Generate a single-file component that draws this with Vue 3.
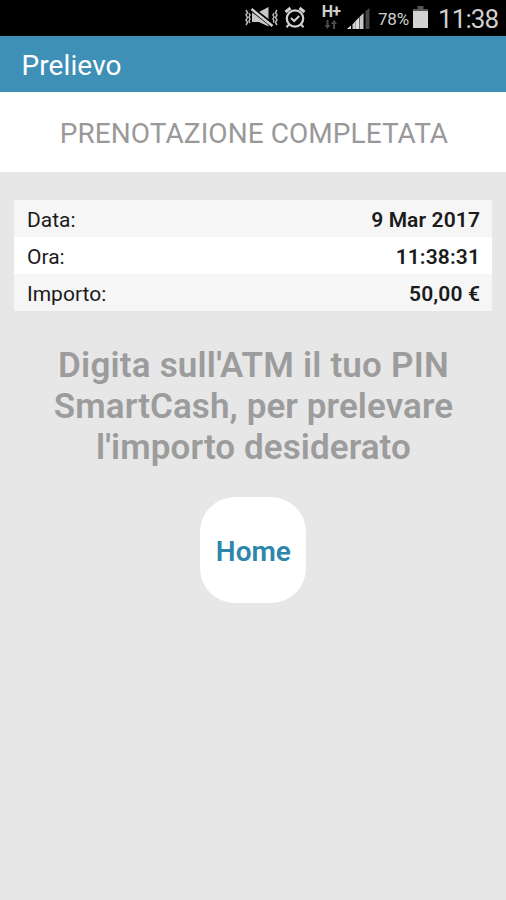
<script setup>
const rows = [
  { label: 'Data:', value: '9 Mar 2017' },
  { label: 'Ora:', value: '11:38:31' },
  { label: 'Importo:', value: '50,00 €' },
]
</script>

<template>
  <div class="screen">
    <div class="status">
      <svg class="vibrate" width="36" height="24" viewBox="0 0 36 24">
        <g fill="none" stroke="#b8b8b8" stroke-width="1.5">
          <path d="M2 3l1.500 2.500-1.500 2.500 1.500 2.500-1.500 2.500 1.500 2.500-1.500 2.500M5 6l1 2-1 2 1 2-1 2 1 2" />
          <path d="M33 3l-1.500 2.500 1.500 2.500-1.500 2.500 1.500 2.500-1.500 2.500 1.500 2.500M30 6l-1 2 1 2-1 2 1 2-1 2" />
        </g>
        <path d="M8 5h7l9.500-5v19.500L15 15H8z" fill="#c8c8c8" />
        <path d="M7 1.500l22 17" stroke="#000" stroke-width="4.800" />
        <path d="M7.500 2l21 17" stroke="#d0d0d0" stroke-width="2.500" />
      </svg>
      <svg class="alarm" width="22" height="24" viewBox="0 0 22 24" fill="none" stroke="#d0d0d0">
        <circle cx="11" cy="12.5" r="8.2" stroke-width="2.300" />
        <path d="M1.500 6l5-4M20.500 6l-5-4" stroke-width="3" />
        <path d="M5 18.500l-2.500 2.700M17 18.500l2.500 2.700M7 12l3.200 3 5-5" stroke-width="2" />
      </svg>
      <div class="network">
        <span class="hplus">H+</span>
        <svg width="14" height="9" viewBox="0 0 14 9" fill="#4c4c4c">
          <path d="M2.500 0h2v5h2l-3 4-3-4h2zM9 9h2V4h2l-3-4-3 4h2z" />
        </svg>
      </div>
      <svg class="signal" width="23" height="22" viewBox="0 0 23 22">
        <path d="M0 21l4-3.500V21z" fill="#ddd" />
        <path d="M5.500 21v-4.500L8.500 13V21z" fill="#d0d0d0" />
        <path d="M8.500 21v-8l3.500-3.500V21z" fill="#ddd" />
        <path d="M12.500 21V9l4-4v16z" fill="#c8c8c8" />
        <path d="M18.500 21V3l4-3v21z" fill="#454545" />
      </svg>
      <span class="percent">78%</span>
      <svg class="battery" width="15" height="23" viewBox="0 0 15 23">
        <path d="M4.500 0h6v3H15v3H0V3h4.500z" fill="#555" />
        <path d="M0 5h15v17H0z" fill="#d2d2d2" />
      </svg>
      <span class="clock">11:38</span>
    </div>
    <header class="bar"><span>Prelievo</span></header>
    <div class="title"><span>PRENOTAZIONE COMPLETATA</span></div>
    <div class="table">
      <div v-for="row in rows" :key="row.label" class="row">
        <span>{{ row.label }}</span>
        <b>{{ row.value }}</b>
      </div>
    </div>
    <p class="message">
      <span class="first">Digita sull'ATM il tuo PIN</span><br />
      <span>SmartCash, per prelevare</span><br />
      <span>l'importo desiderato</span>
    </p>
    <button class="home">Home</button>
  </div>
</template>

<style>
body {
  margin: 0;
  background: #e7e7e7;
}
</style>

<style scoped>
.screen {
  box-sizing: border-box;
  width: 506px;
  height: 900px;
  overflow: hidden;
  background: #e7e7e7;
  font-family: Roboto, sans-serif;
  display: flex;
  flex-direction: column;
}
.status {
  box-sizing: border-box;
  height: 36px;
  flex: none;
  background: #000;
  display: flex;
  align-items: flex-start;
  padding: 0 8px 0 244px;
  color: #cfcfcf;
}
.status > * {
  flex: none;
}
.vibrate {
  margin-top: 7px;
}
.alarm {
  margin: 6px 0 0 4px;
}
.network {
  width: 18px;
  margin: 5px 0 0 16px;
  display: flex;
  flex-direction: column;
  align-items: center;
}
.hplus {
  font-size: 16px;
  line-height: 14px;
  height: 15px;
  font-weight: 700;
  letter-spacing: -0.8px;
}
.signal {
  margin: 8px 0 0 7px;
}
.percent {
  width: 34px;
  margin: 9px 0 0 8px;
  font-size: 17px;
  line-height: 20px;
  letter-spacing: -0.2px;
}
.battery {
  margin: 6px 0 0 1px;
}
.clock {
  margin: 3px 0 0 10px;
  font-size: 26px;
  line-height: 32px;
  letter-spacing: -0.9px;
  white-space: nowrap;
}
.bar {
  height: 56px;
  flex: none;
  background: #3e90b6;
  color: #fff;
  display: flex;
  align-items: center;
  padding-left: 21.5px;
  font-size: 28px;
  letter-spacing: 0.1px;
  padding-top: 2px;
  box-sizing: border-box;
}
.title {
  height: 80px;
  flex: none;
  background: #fff;
  color: #999;
  display: flex;
  align-items: center;
  justify-content: center;
  font-size: 28px;
  letter-spacing: 0.06px;
  white-space: nowrap;
  padding: 2px 0 0 2px;
  box-sizing: border-box;
}
.table {
  margin: 28.4px 13.6px 0 14.4px;
}
.row {
  height: 37px;
  display: flex;
  align-items: center;
  justify-content: space-between;
  padding: 2px 12.4px 0 12.6px;
  box-sizing: border-box;
  background: #f6f6f6;
  font-size: 21px;
  color: #1b1b1b;
}
.row:nth-child(2) {
  background: #fff;
}
.row b {
  font-weight: 600;
  letter-spacing: 0.12px;
}
.message {
  margin: 33.6px 0 0;
  padding-left: 1px;
  text-align: center;
  font-size: 35px;
  line-height: 41px;
  font-weight: 600;
  color: #9c9c9c;
  letter-spacing: 0.08px;
  white-space: nowrap;
}
.first {
  letter-spacing: 0.2px;
}
.home {
  width: 106px;
  height: 106px;
  margin: 29px 0 0 200.4px;
  border: 0;
  padding: 3px 0 0;
  border-radius: 35px;
  background: #fff;
  color: #2e87ab;
  font: 600 28px Roboto, sans-serif;
}
</style>
